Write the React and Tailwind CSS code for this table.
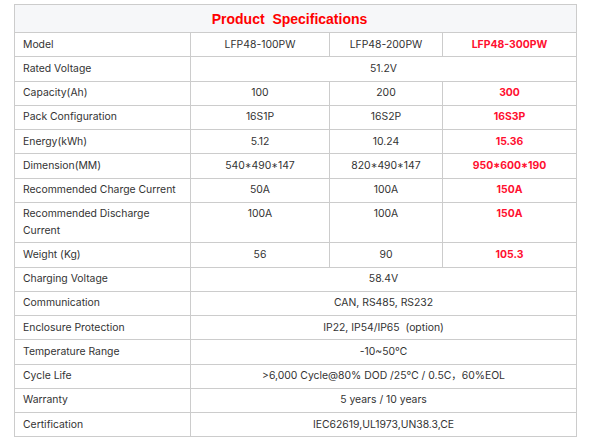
const RED = "text-[#ff1030] font-bold";

const rows = [
  { label: "Model", vals: ["LFP48-100PW", "LFP48-200PW", "LFP48-300PW"] },
  { label: "Rated Voltage", span: "51.2V" },
  { label: "Capacity(Ah)", vals: ["100", "200", "300"] },
  { label: "Pack Configuration", vals: ["16S1P", "16S2P", "16S3P"] },
  { label: "Energy(kWh)", vals: ["5.12", "10.24", "15.36"] },
  { label: "Dimension(MM)", vals: ["540*490*147", "820*490*147", "950*600*190"] },
  { label: "Recommended Charge Current", vals: ["50A", "100A", "150A"] },
  { label: "Recommended Discharge Current", vals: ["100A", "100A", "150A"] },
  { label: "Weight (Kg)", vals: ["56", "90", "105.3"] },
  { label: "Charging Voltage", span: "58.4V" },
  { label: "Communication", span: "CAN, RS485, RS232" },
  { label: "Enclosure Protection", span: "IP22, IP54/IP65\u00a0\u00a0(option)" },
  { label: "Temperature Range", span: "-10~50℃" },
  { label: "Cycle Life", span: ">6,000 Cycle@80% DOD /25℃ / 0.5C，60%EOL" },
  { label: "Warranty", span: "5 years / 10 years" },
  { label: "Certification", span: "IEC62619,UL1973,UN38.3,CE" },
];

const cell = "border border-[#cccccc] px-2 py-[3.5px] leading-[16.25px] align-top";

export default function App() {
  return (
    <div className="w-[605px] h-[447px] bg-white pt-[4px] pl-[14px]">
      <table
        className="w-[562px] table-fixed border-collapse text-[10.4px] text-[#333333]"
        style={{ fontFamily: "Inter, 'Noto Sans CJK SC', sans-serif" }}
      >
        <colgroup>
          <col className="w-[176px]" />
          <col className="w-[139px]" />
          <col className="w-[113px]" />
          <col className="w-[134px]" />
        </colgroup>
        <thead>
          <tr>
            <th
              colSpan={4}
              className="h-[28px] border border-[#cccccc] bg-[#f6f7f9] pr-[12px] text-center text-[14px] font-bold text-[#ff0000] leading-[16px]"
              style={{ fontFamily: "'Liberation Sans', Arial, sans-serif" }}
            >
              Product{"\u00a0\u00a0"}Specifications
            </th>
          </tr>
        </thead>
        <tbody>
          {rows.map((r) => (
            <tr key={r.label}>
              <td className={cell}>{r.label}</td>
              {r.span ? (
                <td colSpan={3} className={cell + " text-center"}>
                  {r.span}
                </td>
              ) : (
                <>
                  <td className={cell + " text-center"}>{r.vals[0]}</td>
                  <td className={cell + " text-center"}>{r.vals[1]}</td>
                  <td className={cell + " text-center " + RED}>{r.vals[2]}</td>
                </>
              )}
            </tr>
          ))}
        </tbody>
      </table>
    </div>
  );
}
